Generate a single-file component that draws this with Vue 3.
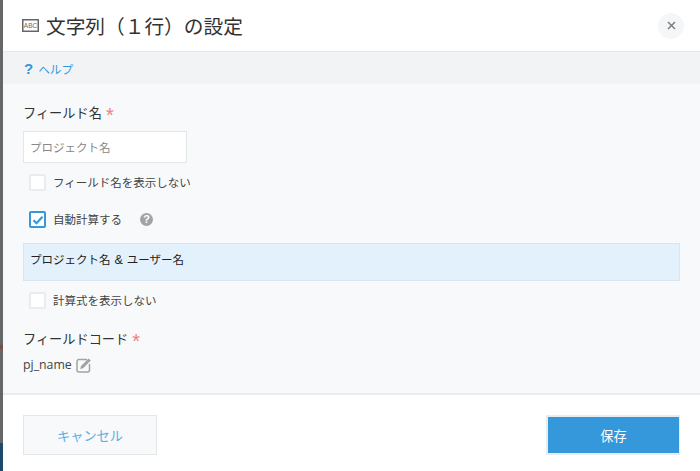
<template>
  <div class="page">
    <div class="backdrop">
      <div class="backdrop-top"></div>
      <div class="backdrop-mark"></div>
      <div class="backdrop-mid"></div>
      <div class="backdrop-bottom"></div>
    </div>
    <div class="dialog">
      <header class="header">
        <svg class="abc-icon" width="17" height="13" viewBox="0 0 17 13">
          <rect x="0.75" y="0.75" width="15.500" height="11.500" fill="#fff" stroke="#666" stroke-width="1.500" />
          <text x="8.500" y="9.300" text-anchor="middle" class="abc-text">ABC</text>
        </svg>
        <h1 class="title">文字列（１行）の設定</h1>
        <button class="close" type="button">
          <svg width="9" height="9" viewBox="0 0 9 9">
            <path d="M1 1l7 7M8 1l-7 7" stroke="#777" stroke-width="1.400" fill="none" />
          </svg>
        </button>
      </header>

      <div class="help-bar">
        <span class="help-mark">?</span>
        <a class="help-link">ヘルプ</a>
      </div>

      <main class="content">
        <div class="label label-first">フィールド名<span class="req">*</span></div>
        <div class="input">プロジェクト名</div>

        <label class="check check-a">
          <span class="box"></span>
          <span>フィールド名を表示しない</span>
        </label>

        <label class="check check-b">
          <span class="box box-on">
            <svg width="12" height="10" viewBox="0 0 12 10">
              <path d="M1.500 5.200l3 3 6-6.400" stroke="#3498db" stroke-width="2.200" fill="none" />
            </svg>
          </span>
          <span>自動計算する</span>
          <span class="hint">?</span>
        </label>

        <div class="formula">プロジェクト名<span class="amp">&amp;</span>ユーザー名</div>

        <label class="check check-c">
          <span class="box"></span>
          <span>計算式を表示しない</span>
        </label>

        <div class="label label-code">フィールドコード<span class="req">*</span></div>
        <div class="code-row">
          <span>pj_name</span>
          <svg class="edit" width="16" height="16" viewBox="0 0 16 16">
            <path d="M11 2.500H3A2 2 0 0 0 1 4.500V13a2 2 0 0 0 2 2h8.500a2 2 0 0 0 2-2V7" stroke="#a3a3a3" stroke-width="1.500" fill="none" />
            <path d="M5 9l7.600-7.600 2.200 2.200L7.200 11.200l-3 .8z" fill="#a3a3a3" />
          </svg>
        </div>
      </main>

      <footer class="footer">
        <button class="btn btn-cancel" type="button">キャンセル</button>
        <button class="btn btn-save" type="button">保存</button>
      </footer>
    </div>
  </div>
</template>

<script setup>
</script>

<style>
html, body {
  margin: 0;
  background: #fff;
}
</style>

<style scoped>
.page {
  display: flex;
  width: 700px;
  height: 471px;
  overflow: hidden;
  font-family: "Noto Sans CJK JP", "Liberation Sans", sans-serif;
  color: #333;
}

.backdrop {
  width: 3px;
  flex-shrink: 0;
  display: flex;
  flex-direction: column;
  background: #666;
}

.backdrop-top {
  height: 345px;
}

.backdrop-mark {
  height: 4px;
  background: #7d4a4a;
}

.backdrop-mid {
  height: 94px;
}

.backdrop-bottom {
  flex: 1;
  background: #1d4a6b;
}

.dialog {
  flex: 1;
  display: flex;
  flex-direction: column;
  background: #fff;
}

.header {
  height: 52px;
  box-sizing: border-box;
  flex-shrink: 0;
  display: flex;
  align-items: center;
  padding: 0 16px 0 19px;
  border-bottom: 1px solid #e3e7e8;
}

.abc-icon {
  margin: 0 7px 0 0;
}

.abc-text {
  font-family: "Liberation Sans", sans-serif;
  font-size: 6.500px;
  fill: #666;
}

.title {
  margin: 0;
  font-size: 19.700px;
  font-weight: 400;
  line-height: 1;
  color: #333;
}

.close {
  margin-left: auto;
  width: 26px;
  height: 26px;
  padding: 0;
  border: none;
  border-radius: 50%;
  background: #f5f6f7;
  display: flex;
  align-items: center;
  justify-content: center;
}

.help-bar {
  height: 32px;
  flex-shrink: 0;
  display: flex;
  align-items: center;
  padding-left: 21px;
  background: #f2f3f5;
  font-size: 11.700px;
}

.help-mark {
  font-family: "Liberation Sans", sans-serif;
  font-size: 15px;
  font-weight: 700;
  color: #3498db;
  margin-right: 5px;
}

.help-link {
  color: #3498db;
}

.content {
  flex: 1;
  background: #f7f9fa;
  padding: 0 20px;
  display: flex;
  flex-direction: column;
}

.label {
  font-size: 13.200px;
  line-height: 20px;
  height: 20px;
  color: #333;
}

.label-first {
  margin-top: 19px;
}

.label-code {
  margin-top: 20px;
}

.req {
  color: #f08080;
  font-family: "Liberation Sans", sans-serif;
  font-size: 20px;
  line-height: 1;
  margin-left: 4px;
  vertical-align: -4px;
}

.input {
  width: 156px;
  height: 30px;
  margin-top: 8px;
  padding-left: 6px;
  background: #fff;
  border: 1px solid #e3e7e8;
  font-size: 11.500px;
  line-height: 30px;
  color: #888;
}

.check {
  display: flex;
  align-items: center;
  margin-left: 6px;
  height: 17px;
  font-size: 11.500px;
  line-height: 17px;
  color: #444;
}

.check-a {
  margin-top: 11px;
}

.check-b {
  margin-top: 20px;
}

.check-c {
  margin-top: 11px;
}

.box {
  box-sizing: border-box;
  width: 17px;
  height: 17px;
  margin-right: 7px;
  background: #fff;
  border: 2px solid #e9ecee;
  border-radius: 2px;
  display: flex;
  align-items: center;
  justify-content: center;
}

.box-on {
  border-color: #3498db;
}

.hint {
  width: 13px;
  height: 13px;
  margin-left: 18px;
  border-radius: 50%;
  background: #a3a3a3;
  color: #fff;
  font-family: "Liberation Sans", sans-serif;
  font-size: 11px;
  font-weight: 700;
  line-height: 13px;
  text-align: center;
}

.formula {
  height: 38px;
  margin-top: 15px;
  padding: 5px 6px 0;
  background: #e2f1fc;
  border: 1px solid #d8e6ef;
  box-sizing: border-box;
  font-size: 11.500px;
  line-height: 20px;
  color: #222;
}

.amp {
  font-family: "Liberation Sans", sans-serif;
  font-size: 12.500px;
  margin: 0 4px;
}

.code-row {
  display: flex;
  align-items: center;
  gap: 4px;
  margin-top: 7px;
  font-family: "Open Sans", "Liberation Sans", sans-serif;
  font-size: 12.300px;
  line-height: 18px;
  color: #444;
}

.footer {
  height: 78px;
  flex-shrink: 0;
  box-sizing: border-box;
  display: flex;
  justify-content: space-between;
  padding: 20px 20px 0;
  border-top: 2px solid #e9ecee;
  background: #fff;
}

.btn {
  height: 40px;
  font-family: inherit;
  font-size: 13.200px;
  padding: 0;
}

.btn-cancel {
  width: 134px;
  background: #f7f9fa;
  border: 1px solid #e3e7e8;
  color: #5dade2;
}

.btn-save {
  width: 134px;
  background: #3498db;
  border: 2px solid #e9ecee;
  border-right-width: 1px;
  color: #fff;
}
</style>
